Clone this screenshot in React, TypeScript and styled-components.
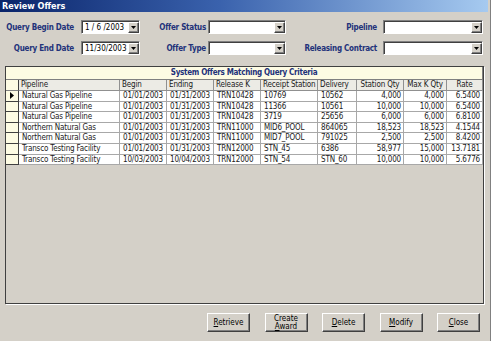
import React from "react";
import styled, { createGlobalStyle } from "styled-components";

const FONT = `"DejaVu Sans Condensed", "Liberation Sans", Arial, sans-serif`;

const GlobalStyle = createGlobalStyle`
  html, body {
    margin: 0;
    padding: 0;
    background: #d4d0c8;
  }
  * {
    box-sizing: border-box;
  }
`;

type Offer = {
  pipeline: string;
  begin: string;
  ending: string;
  releaseK: string;
  receipt: string;
  delivery: string;
  stationQty: string;
  maxQty: string;
  rate: string;
};

const offers: Offer[] = [
  { pipeline: "Natural Gas Pipeline", begin: "01/01/2003", ending: "01/31/2003", releaseK: "TRN10428", receipt: "10769", delivery: "10562", stationQty: "4,000", maxQty: "4,000", rate: "6.5400" },
  { pipeline: "Natural Gas Pipeline", begin: "01/01/2003", ending: "01/31/2003", releaseK: "TRN10428", receipt: "11366", delivery: "10561", stationQty: "10,000", maxQty: "10,000", rate: "6.5400" },
  { pipeline: "Natural Gas Pipeline", begin: "01/01/2003", ending: "01/31/2003", releaseK: "TRN10428", receipt: "3719", delivery: "25656", stationQty: "6,000", maxQty: "6,000", rate: "6.8100" },
  { pipeline: "Northern Natural Gas", begin: "01/01/2003", ending: "01/31/2003", releaseK: "TRN11000", receipt: "MID6_POOL", delivery: "864065", stationQty: "18,523", maxQty: "18,523", rate: "4.1544" },
  { pipeline: "Northern Natural Gas", begin: "01/01/2003", ending: "01/31/2003", releaseK: "TRN11000", receipt: "MID7_POOL", delivery: "791025", stationQty: "2,500", maxQty: "2,500", rate: "8.4200" },
  { pipeline: "Transco Testing Facility", begin: "01/01/2003", ending: "01/31/2003", releaseK: "TRN12000", receipt: "STN_45", delivery: "6386", stationQty: "58,977", maxQty: "15,000", rate: "13.7181" },
  { pipeline: "Transco Testing Facility", begin: "10/03/2003", ending: "10/04/2003", releaseK: "TRN12000", receipt: "STN_54", delivery: "STN_60", stationQty: "10,000", maxQty: "10,000", rate: "5.6776" },
];

const columns = [
  { title: "Pipeline", align: "left" },
  { title: "Begin", align: "left" },
  { title: "Ending", align: "left" },
  { title: "Release K", align: "left" },
  { title: "Receipt Station", align: "left" },
  { title: "Delivery", align: "left" },
  { title: "Station Qty", align: "center" },
  { title: "Max K Qty", align: "center" },
  { title: "Rate", align: "center" },
];

const DropArrow = () => (
  <svg width="5" height="3" viewBox="0 0 5 3">
    <polygon points="0,0 5,0 2.5,3" fill="#000" />
  </svg>
);

const RowPointer = () => (
  <svg width="4" height="7" viewBox="0 0 4 7">
    <polygon points="0,0 4,3.5 0,7" fill="#000" />
  </svg>
);

const Combo = ({ value, width }: { value?: string; width: number }) => (
  <ComboBox style={{ width }}>
    <ComboText>{value}</ComboText>
    <DropButton>
      <DropArrow />
    </DropButton>
  </ComboBox>
);

const App = () => {
  return (
    <>
      <GlobalStyle />
      <Window>
        <TitleBar>Review Offers</TitleBar>
        <QueryForm>
          <FieldLabel $gap={7}>Query Begin Date</FieldLabel>
          <Combo value="1 / 6 /2003" width={59} />
          <FieldLabel $gap={2}>Offer Status</FieldLabel>
          <Combo width={78} />
          <FieldLabel $gap={6}>Pipeline</FieldLabel>
          <Combo width={100} />

          <FieldLabel $gap={7}>Query End Date</FieldLabel>
          <Combo value="11/30/2003" width={59} />
          <FieldLabel $gap={2}>Offer Type</FieldLabel>
          <Combo width={78} />
          <FieldLabel $gap={6}>Releasing Contract</FieldLabel>
          <Combo width={100} />
        </QueryForm>

        <GridFrame>
          <Grid>
            <Caption>System Offers Matching Query Criteria</Caption>
            <SelectorCell $header />
            {columns.map((col) => (
              <HeaderCell key={col.title} $align={col.align}>
                {col.title}
              </HeaderCell>
            ))}
            {offers.map((o, i) => (
              <React.Fragment key={i}>
                <SelectorCell>{i === 0 && <RowPointer />}</SelectorCell>
                <Cell>{o.pipeline}</Cell>
                <Cell>{o.begin}</Cell>
                <Cell>{o.ending}</Cell>
                <Cell>{o.releaseK}</Cell>
                <Cell>{o.receipt}</Cell>
                <Cell>{o.delivery}</Cell>
                <Cell $align="right">{o.stationQty}</Cell>
                <Cell $align="right">{o.maxQty}</Cell>
                <Cell $align="right">{o.rate}</Cell>
              </React.Fragment>
            ))}
          </Grid>
        </GridFrame>

        <ButtonRow>
          <Button>
            <u>R</u>etrieve
          </Button>
          <Button>
            Create
            <br />
            <u>A</u>ward
          </Button>
          <Button>
            <u>D</u>elete
          </Button>
          <Button>
            <u>M</u>odify
          </Button>
          <Button>
            <u>C</u>lose
          </Button>
        </ButtonRow>
      </Window>
    </>
  );
};

export default App;

const Window = styled.div`
  width: 491px;
  height: 341px;
  background: #d4d0c8;
  font-family: ${FONT};
  display: flex;
  flex-direction: column;
  padding-right: 2px;
  border-right: 1px solid #808080;
  overflow: hidden;
`;

const TitleBar = styled.div`
  height: 12px;
  line-height: 12px;
  padding-left: 2px;
  color: #ffffff;
  font-weight: bold;
  font-size: 9px;
  background: linear-gradient(to right, #0a246a 0%, #3a62ad 45%, #a6caf0 100%);
`;

const QueryForm = styled.div`
  display: grid;
  grid-template-columns: 81px 59px 68px 78px 97px 100px;
  grid-auto-rows: 14px;
  row-gap: 7px;
  padding-top: 8px;
`;

const FieldLabel = styled.div<{ $gap: number }>`
  display: flex;
  align-items: center;
  justify-content: flex-end;
  padding-right: ${({ $gap }) => $gap}px;
  color: #22327a;
  font-weight: bold;
  font-size: 8px;
  letter-spacing: -0.25px;
  white-space: nowrap;
`;

const ComboBox = styled.div`
  height: 14px;
  display: flex;
  align-items: stretch;
  background: #ffffff;
  border: 1px solid;
  border-color: #808080 #ffffff #ffffff #808080;
  box-shadow: inset 1px 1px 0 #404040;
  padding: 1px 0 0 1px;
`;

const ComboText = styled.div`
  flex: 1 1 auto;
  font-size: 8px;
  line-height: 11px;
  padding-left: 2px;
  color: #000;
  white-space: nowrap;
`;

const DropButton = styled.div`
  flex: 0 0 11px;
  display: flex;
  align-items: center;
  justify-content: center;
  background: #d4d0c8;
  border: 1px solid;
  border-color: #ffffff #404040 #404040 #ffffff;
  box-shadow: inset -1px -1px 0 #808080;
`;

const GridFrame = styled.div`
  margin: 11px 0 0 5px;
  width: 479px;
  height: 238px;
  border: 1px solid #404040;
  box-shadow: 1px 1px 0 #ffffff;
`;

const Grid = styled.div`
  display: grid;
  grid-template-columns: 13px 101px 47px 47px 47px 57px 39px 47px 43px 36px;
  grid-template-rows: 13px 11px repeat(7, 10.6px);
  font-size: 8px;
  letter-spacing: -0.15px;
  color: #1a1a1a;
`;

const Caption = styled.div`
  grid-column: 1 / -1;
  background: #fdfbe3;
  border-bottom: 1px solid #808080;
  border-right: 1px solid #808080;
  color: #22327a;
  font-weight: bold;
  font-size: 8px;
  letter-spacing: -0.3px;
  line-height: 12px;
  text-align: center;
`;

const SelectorCell = styled.div<{ $header?: boolean }>`
  background: #fdfbe3;
  border-right: 1px solid #404040;
  border-bottom: 1px solid ${({ $header }) => ($header ? "#808080" : "#404040")};
  display: flex;
  align-items: center;
  justify-content: center;
`;

const HeaderCell = styled.div<{ $align: string }>`
  background: #ecebe5;
  border-right: 1px solid #909090;
  border-bottom: 1px solid #909090;
  padding: 0 2px;
  line-height: 10px;
  text-align: ${({ $align }) => $align};
  white-space: nowrap;
  overflow: hidden;
`;

const Cell = styled.div<{ $align?: string }>`
  background: #ffffff;
  border-right: 1px solid #a8a8a8;
  border-bottom: 1px solid #a8a8a8;
  padding: 0 2px 0 3px;
  line-height: 9.6px;
  text-align: ${({ $align }) => $align || "left"};
  white-space: nowrap;
  overflow: hidden;
`;

const ButtonRow = styled.div`
  display: flex;
  justify-content: flex-end;
  gap: 14.5px;
  margin-top: 9px;
  padding-right: 8px;
`;

const Button = styled.button`
  width: 43px;
  height: 19px;
  padding: 0;
  background: #d4d0c8;
  border: 1px solid;
  border-color: #ffffff #404040 #404040 #ffffff;
  box-shadow: inset -1px -1px 0 #808080;
  font-family: ${FONT};
  font-size: 8px;
  line-height: 8px;
  color: #000;
`;
